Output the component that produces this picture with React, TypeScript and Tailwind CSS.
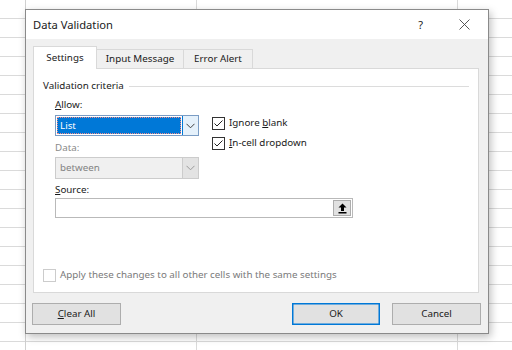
import React from "react";

const font = "font-['Segoe_UI','Noto_Sans',sans-serif]";

function Chevron({ color = "#606060" }: { color?: string }) {
  return (
    <svg width="9" height="6" viewBox="0 0 9 6">
      <polyline points="0.5,0.8 4.5,4.8 8.5,0.8" fill="none" stroke={color} strokeWidth="1" />
    </svg>
  );
}

function Check({ label, u, rest }: { label?: string; u: string; rest: string }) {
  return (
    <div className="flex items-center h-[16px]">
      <div className="w-[13px] h-[13px] border border-[#333333] bg-white flex items-center justify-center">
        <svg width="11" height="11" viewBox="0 0 11 11">
          <polyline points="1.5,5.5 4,8 9.5,2.5" fill="none" stroke="#222" strokeWidth="1" />
        </svg>
      </div>
      <span className="ml-[4px] text-[#1a1a1a]">
        {label}
        <span className="underline">{u}</span>
        {rest}
      </span>
    </div>
  );
}

export default function App() {
  return (
    <div className={`relative w-[512px] h-[350px] overflow-hidden bg-white ${font} text-[9.8px] leading-[16px] text-[#1a1a1a]`}>
      {/* spreadsheet background */}
      <div className="absolute inset-0 flex bg-[repeating-linear-gradient(to_bottom,transparent_0px,transparent_18px,#dadada_18px,#dadada_19px)]">
        <div className="w-[26px] h-full border-r border-[#d0d0d0]" />
        <div className="w-[171px] h-full border-r border-[#dadada]" />
        <div className="w-[261px] h-full border-r border-[#dadada]" />
        <div className="flex-1" />
      </div>

      {/* dialog */}
      <div className="absolute left-[25px] top-[9px] w-[464px] h-[325px] border border-[#8a8a8a] bg-[#f0f0f0] shadow-[2px_3px_8px_rgba(0,0,0,0.25)] flex flex-col">
        {/* title bar */}
        <div className="h-[29px] bg-white flex items-center pl-[7px] pr-[18px] shrink-0">
          <span className="text-[11.2px]">Data Validation</span>
          <div className="flex-1" />
          <span className="text-[11px] mr-[36px]">?</span>
          <svg width="11" height="11" viewBox="0 0 11 11">
            <path d="M0.5 0.5 L10.5 10.5 M10.5 0.5 L0.5 10.5" stroke="#444" strokeWidth="0.9" />
          </svg>
        </div>

        {/* tabs */}
        <div className="px-[7px] pt-[7px]">
          <div className="flex items-end h-[22px]">
            <div className="relative z-10 w-[64px] h-[23px] -mb-px bg-white border border-b-0 border-[#d9d9d9] flex items-center justify-center">
              Settings
            </div>
            <div className="w-[87px] h-[19px] border border-l-0 border-b-0 border-[#d9d9d9] flex items-center justify-center">
              Input Message
            </div>
            <div className="w-[69px] h-[19px] border border-l-0 border-b-0 border-[#d9d9d9] flex items-center justify-center">
              Error Alert
            </div>
          </div>

          {/* panel */}
          <div className="w-[446px] h-[225px] bg-white border border-[#d9d9d9] flex flex-col">
            <div className="flex items-center pl-[9px] pr-[9px] mt-[9px] h-[16px]">
              <span>Validation criteria</span>
              <div className="flex-1 h-px bg-[#dcdcdc] ml-[5px]" />
            </div>

            <div className="flex pl-[21px] mt-[3px]">
              <div className="w-[144px] flex flex-col">
                <span className="h-[16px]">
                  <span className="underline">A</span>llow:
                </span>
                <div className="mt-[2px] h-[21px] border border-[#7a9cc4] flex bg-white">
                  <div className="flex-1 m-px bg-[#0078d7] border border-dotted border-[#f08a8a] text-white flex items-center pl-[2px]">
                    List
                  </div>
                  <div className="w-[16px] bg-[#e5f1fb] border-l border-[#0078d7] flex items-center justify-center">
                    <Chevron color="#404040" />
                  </div>
                </div>
                <span className="text-[#8a8a8a] h-[16px] mt-[4px]">Data:</span>
                <div className="mt-[1px] h-[22px] border border-[#cccccc] flex bg-[#f0f0f0]">
                  <div className="flex-1 text-[#838383] flex items-center pl-[4px]">between</div>
                  <div className="w-[16px] bg-[#e3e3e3] border-l border-[#cccccc] flex items-center justify-center">
                    <Chevron color="#9a9a9a" />
                  </div>
                </div>
              </div>
              <div className="ml-[13px] pt-[18px] flex flex-col gap-[4px]">
                <Check label="Ignore " u="b" rest="lank" />
                <Check u="I" rest="n-cell dropdown" />
              </div>
            </div>

            <div className="pl-[21px] mt-[3px]">
              <span className="h-[16px] block">
                <span className="underline">S</span>ource:
              </span>
              <div className="w-[298px] h-[20px] border border-[#b9b9b9] bg-white flex justify-end">
                <div className="w-[20px] h-full p-px">
                  <div className="w-full h-full bg-[#e1e1e1] border border-[#adadad] flex items-center justify-center">
                    <svg width="9" height="11" viewBox="0 0 9 11">
                      <path d="M4.5 0.5 L8.5 4.5 L6 4.5 L6 8 L3 8 L3 4.5 L0.5 4.5 Z" fill="#000" />
                      <rect x="0.5" y="9" width="8" height="1.5" fill="#000" />
                    </svg>
                  </div>
                </div>
              </div>
            </div>

            <div className="mt-auto mb-[9px] pl-[9px] flex items-center h-[16px]">
              <div className="w-[13px] h-[13px] border border-[#cccccc] bg-white" />
              <span className="ml-[4px] text-[#7a7a7a]">
                Apply these changes to all other cells with the same settings
              </span>
            </div>
          </div>
        </div>

        {/* buttons */}
        <div className="flex items-center pl-[6px] pr-[7px] mt-[10px]">
          <div className="w-[89px] h-[22px] bg-[#e1e1e1] border border-[#adadad] flex items-center justify-center">
            <span>
              <span className="underline">C</span>lear All
            </span>
          </div>
          <div className="flex-1" />
          <div className="w-[88px] h-[22px] bg-[#e1e1e1] border border-[#0078d7] shadow-[inset_0_0_0_0.5px_#0078d7] flex items-center justify-center">
            OK
          </div>
          <div className="ml-[12px] w-[89px] h-[22px] bg-[#e1e1e1] border border-[#adadad] flex items-center justify-center">
            Cancel
          </div>
        </div>
      </div>
    </div>
  );
}
